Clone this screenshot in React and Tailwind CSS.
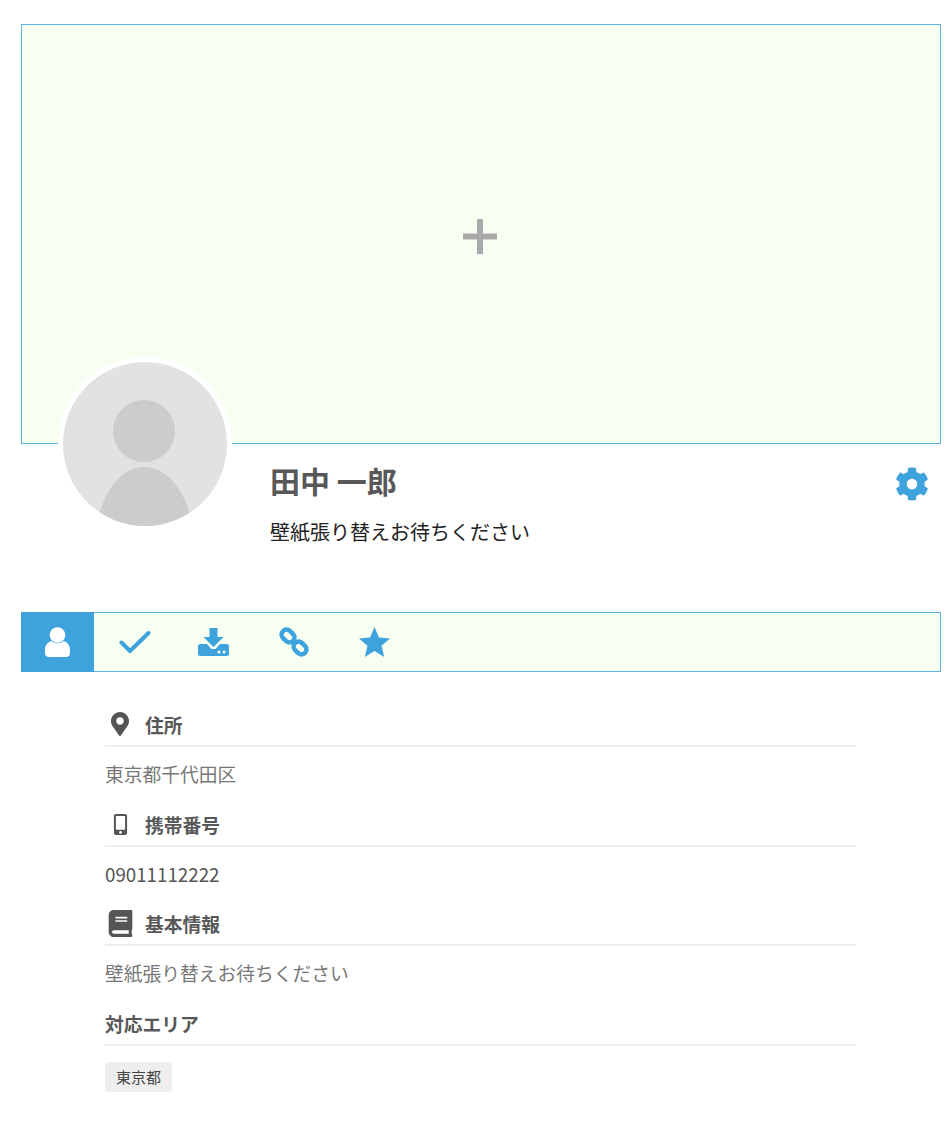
import React from "react";
import { FaCog, FaMapMarkerAlt, FaMobileAlt, FaBook } from "react-icons/fa";

const font = { fontFamily: '"Noto Sans CJK JP", "Noto Sans", sans-serif' };

function Label({ icon, children }) {
  return (
    <div className="flex items-center h-[40px] border-b-2 border-[#eeeeee] text-[18.75px] font-bold text-[#585858] leading-none">
      {icon && <span className="w-[30px] mr-[10px] flex justify-center items-center pb-[4px]">{icon}</span>}
      <span className="pb-[2px]">{children}</span>
    </div>
  );
}

export default function App() {
  return (
    <div className="w-[950px] h-[1128px] bg-white pt-[24px] pl-[21px] pr-[20px]" style={font}>
      <div className="h-[420px] w-[920px] border border-[#5fb2e3] bg-[#f6fff1] flex items-center justify-center">
        <svg width="34" height="35" viewBox="0 0 34 35" className="mt-[4px] ml-[-2px]">
          <path d="M14 0h6v14.500h14v6h-14v14.500h-6v-14.500h-14v-6h14z" fill="#aaaaaa" />
        </svg>
      </div>

      <div className="flex items-start relative mt-[-87px] pl-[37px]">
        <div className="w-[174px] h-[174px] rounded-full bg-white p-[5px] shrink-0">
          <svg width="164" height="164" viewBox="0 0 164 164" className="block rounded-full bg-[#e2e2e2]">
            <circle cx="81" cy="69" r="31" fill="#cccccc" />
            <path d="M37 149C45 125 60 105 81 105C103 105 118 125 126 149L126 170L37 170Z" fill="#cccccc" />
          </svg>
        </div>
        <div className="ml-[38px] flex-1 pt-[101px] flex items-start">
          <div className="flex-1">
            <div className="text-[30px] font-bold text-[#585858] leading-[44px]">田中 一郎</div>
            <div className="text-[20px] text-[#222222] leading-[30px] mt-[15px]">壁紙張り替えお待ちください</div>
          </div>
          <FaCog className="text-[#3ea2dd] mt-[9px] mr-[1px]" size={34} />
        </div>
      </div>

      <div className="mt-[65px] h-[60px] w-[920px] border border-[#5fb2e3] bg-[#f6fff1] flex items-stretch">
        <div className="w-[73px] ml-[-1px] my-[-1px] bg-[#3ea2dd] flex items-center justify-center">
          <svg width="25" height="30" viewBox="0 0 25 30" fill="#ffffff">
            <circle cx="12.500" cy="8" r="7.800" />
            <path d="M6.500 14C9.500 17 15.500 17 18.500 14C22.500 15 25 18.500 25 23V26C25 28.500 23.500 30 21 30H4C1.500 30 0 28.500 0 26V23C0 18.500 2.500 15 6.500 14Z" />
          </svg>
        </div>
        <div className="flex items-center ml-[1px]">
          <span className="w-[79px] flex justify-center">
            <svg width="32" height="24" viewBox="0 0 32 24" fill="none" stroke="#3ea2dd" strokeWidth="4" strokeLinecap="round" strokeLinejoin="round">
              <path d="M2.500 12.500L11 21L29.500 3" />
            </svg>
          </span>
          <span className="w-[80px] flex justify-center pr-[2px]">
            <svg width="31" height="28" viewBox="0 0 31 28" fill="#3ea2dd">
              <path d="M11.500 0h8v9h6L15.500 19L5.500 9h6z" />
              <path fillRule="evenodd" d="M2 16h7l4.500 5h4l4.500-5h7c1 0 2 1 2 2v8c0 1-1 2-2 2H2c-1 0-2-1-2-2v-8c0-1 1-2 2-2zM21 22.500a1.500 1.500 0 1 0 0 3a1.500 1.500 0 0 0 0-3zM26 22.500a1.500 1.500 0 1 0 0 3a1.500 1.500 0 0 0 0-3z" />
            </svg>
          </span>
          <span className="w-[80px] flex justify-center">
            <svg width="30" height="30" viewBox="0 0 30 30" fill="none" stroke="#3ea2dd" strokeWidth="4.500">
              <rect x="2" y="4" width="14" height="10" rx="5" transform="rotate(45 9 9)" />
              <rect x="14" y="16" width="14" height="10" rx="5" transform="rotate(45 21 21)" />
            </svg>
          </span>
          <span className="w-[80px] flex justify-center">
            <svg width="31" height="30" viewBox="0 0 31 30" fill="#3ea2dd">
              <path d="M15.500 0L20 10.500L31 11.500L22.500 18.700L25.200 30L15.500 24L5.800 30L8.500 18.700L0 11.500L11 10.500Z" />
            </svg>
          </span>
        </div>
      </div>

      <div className="w-[751px] ml-[84px] mt-[35px]">
        <Label icon={<FaMapMarkerAlt className="text-[#555555]" size={24} />}>住所</Label>
        <div className="h-[60px] flex items-center text-[18.75px] text-[#777777] pb-[5px]">東京都千代田区</div>
        <Label icon={<FaMobileAlt className="text-[#555555]" size={21} />}>携帯番号</Label>
        <div className="h-[59px] flex items-center text-[18.75px] text-[#555555] pb-[5px]">09011112222</div>
        <Label icon={<FaBook className="text-[#555555]" size={27} />}>基本情報</Label>
        <div className="h-[60px] flex items-center text-[18.75px] text-[#777777] pb-[5px]">壁紙張り替えお待ちください</div>
        <Label>対応エリア</Label>
        <div className="mt-[16px] inline-flex items-center h-[30px] px-[11px] rounded-[4px] bg-[#eeeeee] text-[15px] text-[#444444]">東京都</div>
      </div>
    </div>
  );
}
